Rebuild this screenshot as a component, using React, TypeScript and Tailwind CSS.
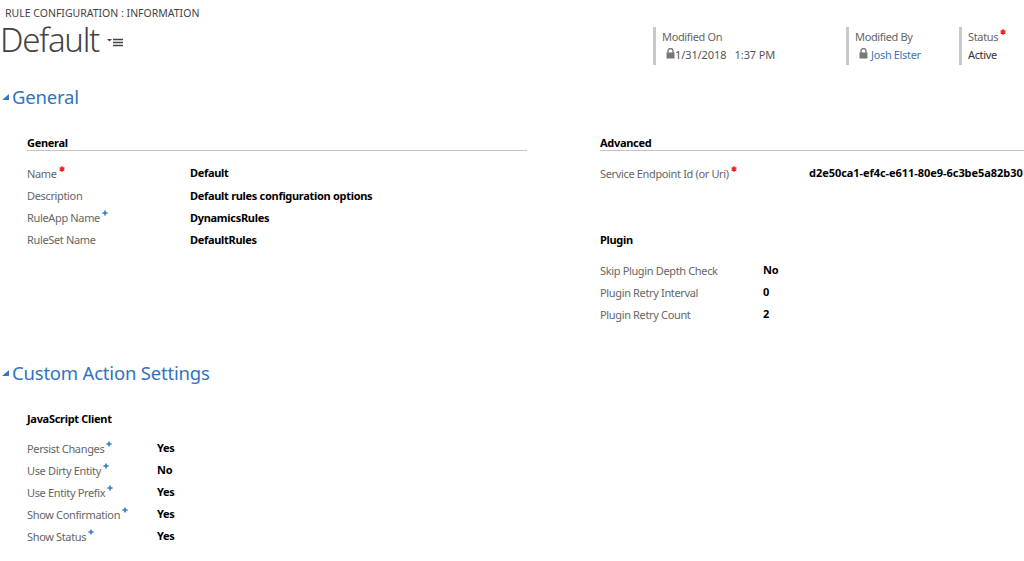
import React from 'react';

const font = 'font-["Noto_Sans","Open_Sans",sans-serif]';

function Lock() {
  return (
    <svg width="9" height="11" viewBox="0 0 9 11" className="shrink-0">
      <path d="M2 5V3a2.5 2.5 0 0 1 5 0v2" fill="none" stroke="#777" strokeWidth="1.3" />
      <rect x="0.5" y="4.5" width="8" height="6" fill="#777" />
    </svg>
  );
}

function MenuIcon() {
  return (
    <svg width="17" height="11" viewBox="0 0 17 11">
      <path d="M0 2h5L2.5 4.5z" fill="#444" />
      <path d="M6 2.5h10M6 5.5h10M6 8.5h10" stroke="#444" strokeWidth="1.4" />
    </svg>
  );
}

function Caret() {
  return (
    <svg width="8" height="8" viewBox="0 0 8 8" className="shrink-0">
      <path d="M7 1v6H0z" fill="#3a76bd" />
    </svg>
  );
}

function Mark({ kind }: { kind?: 'req' | 'rec' }) {
  if (!kind) return null;
  return (
    <span className="relative -top-[6px] ml-[2px]">
      {kind === 'req' ? (
        <svg width="6" height="6" viewBox="0 0 7 7" className="inline-block">
          <path d="M3.5 0.3v6.4M0.7 1.9l5.6 3.2M6.3 1.9L0.7 5.1" stroke="#f01c1c" strokeWidth="1.7" />
        </svg>
      ) : (
        <svg width="6" height="6" viewBox="0 0 7 7" className="inline-block">
          <path d="M3.5 0.5v6M0.5 3.5h6" stroke="#2f79c9" strokeWidth="1.8" />
        </svg>
      )}
    </span>
  );
}

interface FieldProps {
  label: string;
  value: string;
  mark?: 'req' | 'rec';
  labelW: string;
  valueClass?: string;
}

function Field({ label, value, mark, labelW, valueClass = '-translate-y-[1px] tracking-[-0.3px]' }: FieldProps) {
  return (
    <div className="flex h-[22px] items-center whitespace-nowrap">
      <div className={`${labelW} shrink-0 text-[11px] tracking-[-0.35px] text-[#666]`}>
        {label}
        <Mark kind={mark} />
      </div>
      <div className={`${valueClass} text-[11px] font-bold text-black`}>{value}</div>
    </div>
  );
}

function SectionTitle({ children }: { children: string }) {
  return (
    <div className="flex items-center gap-[2px] pl-[2px]">
      <Caret />
      <span className="text-[18.5px] leading-[26px] tracking-[-0.2px] text-[#2e75bd]">{children}</span>
    </div>
  );
}

function HeaderStat({ title, mark, width, children }: { title: string; mark?: 'req'; width: string; children: React.ReactNode }) {
  return (
    <div className={`${width} h-[38px] border-l-[3px] border-[#c8c8c8] pt-[1px] pl-[6px] tracking-[-0.35px]`}>
      <div className="text-[11px] leading-[18px] text-[#666]">
        {title}
        <Mark kind={mark} />
      </div>
      <div className="flex items-center text-[11px] leading-[18px] whitespace-nowrap">{children}</div>
    </div>
  );
}

export default function App() {
  return (
    <div className={`${font} flex h-[561px] w-[1024px] flex-col overflow-hidden bg-white`}>
      <div className="flex h-[80px] shrink-0">
        <div className="w-[653px] shrink-0">
          <div className="pt-[5px] pl-[5px] text-[10.5px] leading-[16px] text-[#444]">RULE CONFIGURATION : INFORMATION</div>
          <div className="mt-[1px] flex items-center">
            <span className="text-[33px] leading-[36px] font-light tracking-[-1.3px] text-[#444]">Default</span>
            <span className="mt-[5px] ml-[8px]"><MenuIcon /></span>
          </div>
        </div>
        <div className="flex pt-[27px]">
          <HeaderStat title="Modified On" width="w-[193px]">
            <span className="ml-[4px] -translate-y-[2px]"><Lock /></span>
            <span className="tracking-[-0.1px] text-[#555]">1/31/2018&nbsp;&nbsp; 1:37 PM</span>
          </HeaderStat>
          <HeaderStat title="Modified By" width="w-[113px]">
            <span className="ml-[4px] -translate-y-[2px]"><Lock /></span>
            <span className="ml-[3px] text-[#3a76bd]">Josh Elster</span>
          </HeaderStat>
          <HeaderStat title="Status" mark="req" width="w-[65px]">
            <span className="text-[#333]">Active</span>
          </HeaderStat>
        </div>
      </div>

      <div className="mt-[4px]"><SectionTitle>General</SectionTitle></div>

      <div className="mt-[26px] flex h-[224px] shrink-0">
        <div className="ml-[27px] w-[500px] shrink-0">
          <div className="h-[15px] border-b border-[#c4c4c4] text-[11px] leading-[14px] font-bold tracking-[-0.3px] text-black">General</div>
          <div className="mt-[12px]">
            <Field label="Name" mark="req" value="Default" labelW="w-[163px]" />
            <Field label="Description" value="Default rules configuration options" labelW="w-[163px]" valueClass="tracking-[-0.3px]" />
            <Field label="RuleApp Name" mark="rec" value="DynamicsRules" labelW="w-[163px]" valueClass="tracking-[-0.3px]" />
            <Field label="RuleSet Name" value="DefaultRules" labelW="w-[163px]" valueClass="tracking-[-0.3px]" />
          </div>
        </div>
        <div className="ml-[73px] w-[424px] shrink-0">
          <div className="h-[15px] border-b border-[#c4c4c4] text-[11px] leading-[14px] font-bold tracking-[-0.3px] text-black">Advanced</div>
          <div className="mt-[12px]">
            <Field label="Service Endpoint Id (or Uri)" mark="req" value="d2e50ca1-ef4c-e611-80e9-6c3be5a82b30" labelW="w-[209px]" valueClass="-translate-y-[1px] tracking-[-0.05px]" />
          </div>
          <div className="mt-[47px] text-[11px] leading-[16px] font-bold tracking-[-0.3px] text-black">Plugin</div>
          <div className="mt-[12px]">
            <Field label="Skip Plugin Depth Check" value="No" labelW="w-[163px]" />
            <Field label="Plugin Retry Interval" value="0" labelW="w-[163px]" />
            <Field label="Plugin Retry Count" value="2" labelW="w-[163px]" />
          </div>
        </div>
      </div>

      <SectionTitle>Custom Action Settings</SectionTitle>

      <div className="mt-[25px] ml-[27px]">
        <div className="text-[11px] leading-[16px] font-bold tracking-[-0.3px] text-black">JavaScript Client</div>
        <div className="mt-[11px]">
          <Field label="Persist Changes" mark="rec" value="Yes" labelW="w-[130px]" />
          <Field label="Use Dirty Entity" mark="rec" value="No" labelW="w-[130px]" />
          <Field label="Use Entity Prefix" mark="rec" value="Yes" labelW="w-[130px]" />
          <Field label="Show Confirmation" mark="rec" value="Yes" labelW="w-[130px]" />
          <Field label="Show Status" mark="rec" value="Yes" labelW="w-[130px]" />
        </div>
      </div>
    </div>
  );
}
